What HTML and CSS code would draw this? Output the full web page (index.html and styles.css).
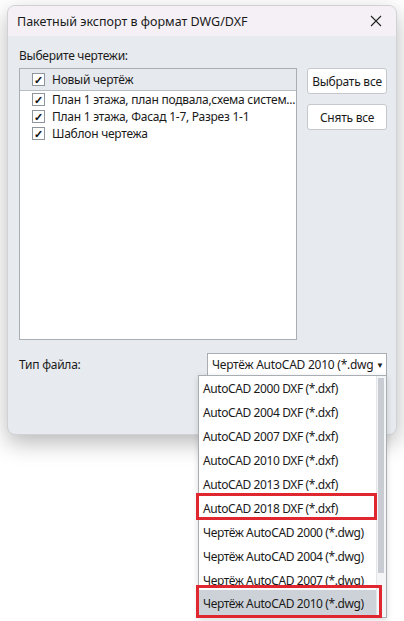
FILE: index.html
```html
<!DOCTYPE html>
<html lang="ru">
<head>
    <meta charset="UTF-8">
    <title>Пакетный экспорт</title>
    <link rel="stylesheet" href="styles.css">
</head>
<body>
    <div class="desktop">
        <!-- окно диалога -->
        <div class="dialog">
            <div class="titlebar">
                <div class="title">Пакетный экспорт в формат DWG/DXF</div>
                <svg class="close" width="12" height="12" viewBox="0 0 12 12">
                    <path d="M1 1 L11 11 M11 1 L1 11" stroke="#222" stroke-width="1.1" fill="none"/>
                </svg>
            </div>

            <div class="dialog-body">
                <div class="caption">Выберите чертежи:</div>

                <div class="main-row">
                    <div class="listbox">
                        <div class="list-item current">
                            <span class="check">✓</span>
                            <span class="item-text">Новый чертёж</span>
                        </div>
                        <div class="list-item">
                            <span class="check">✓</span>
                            <span class="item-text">План 1 этажа, план подвала,схема систем...</span>
                        </div>
                        <div class="list-item">
                            <span class="check">✓</span>
                            <span class="item-text">План 1 этажа, Фасад 1-7, Разрез 1-1</span>
                        </div>
                        <div class="list-item">
                            <span class="check">✓</span>
                            <span class="item-text">Шаблон чертежа</span>
                        </div>
                    </div>

                    <div class="buttons">
                        <div class="btn">Выбрать все</div>
                        <div class="btn">Снять все</div>
                    </div>
                </div>

                <div class="filetype-row">
                    <div class="filetype-label">Тип файла:</div>
                    <div class="combo">
                        <div class="combo-clip"><span class="combo-text">Чертёж AutoCAD 2010 (*.dwg)</span></div>
                        <span class="combo-arrow">▼</span>
                    </div>
                </div>
            </div>
        </div>

        <!-- выпадающий список -->
        <div class="dropdown">
            <div class="dropdown-items">
                <div class="dd-item">AutoCAD 2000 DXF (*.dxf)</div>
                <div class="dd-item">AutoCAD 2004 DXF (*.dxf)</div>
                <div class="dd-item">AutoCAD 2007 DXF (*.dxf)</div>
                <div class="dd-item">AutoCAD 2010 DXF (*.dxf)</div>
                <div class="dd-item">AutoCAD 2013 DXF (*.dxf)</div>
                <div class="dd-item marked">AutoCAD 2018 DXF (*.dxf)</div>
                <div class="dd-item">Чертёж AutoCAD 2000 (*.dwg)</div>
                <div class="dd-item">Чертёж AutoCAD 2004 (*.dwg)</div>
                <div class="dd-item">Чертёж AutoCAD 2007 (*.dwg)</div>
                <div class="dd-item selected marked">Чертёж AutoCAD 2010 (*.dwg)</div>
            </div>
            <div class="scrollbar">
                <div class="thumb"></div>
            </div>
        </div>
    </div>
</body>
</html>
```

FILE: styles.css
```css
* {
    margin: 0;
    padding: 0;
    box-sizing: border-box;
}

body {
    font-family: "Noto Sans", "Open Sans", sans-serif;
    font-size: 12px;
    letter-spacing: -0.25px;
    color: #1a1a1a;
    background: #ffffff;
}

/* рабочая область */
.desktop {
    position: relative;
    width: 404px;
    height: 621px;
    padding: 5px 7px 0 7px;
    overflow: hidden;
    background: #ffffff;
}

/* окно */
.dialog {
    width: 390px;
    height: 430px;
    border: 1px solid #cfd1d5;
    border-radius: 8px;
    background: #e7eaee;
    box-shadow: 0 8px 22px rgba(0, 0, 0, 0.28);
    overflow: hidden;
}

.titlebar {
    height: 30px;
    background: #f4f0f6;
    display: flex;
    align-items: center;
    padding: 0 14px 0 9px;
}
.title {
    flex: 1;
    font-size: 12.5px;
    letter-spacing: 0;
    color: #1a1a1a;
}
.close {
    display: block;
}

.dialog-body {
    padding: 12px 9px 0 11px;
}

.caption {
    height: 20px;
    line-height: 16px;
}

.main-row {
    display: flex;
    gap: 10px;
}

/* список чертежей */
.listbox {
    width: 278px;
    height: 272px;
    background: #ffffff;
    border: 1px solid #a9aeb5;
}
.list-item {
    height: 17px;
    display: flex;
    align-items: center;
    padding-left: 12px;
    white-space: nowrap;
}
.list-item.current {
    height: 22px;
    background: #e6e9ed;
    border-bottom: 1px solid #b9bec5;
}
.check {
    width: 13px;
    height: 13px;
    border: 1px solid #8f959c;
    background: #fff;
    font-size: 11px;
    line-height: 11px;
    text-align: center;
    font-weight: bold;
    color: #111;
    margin-right: 7px;
}

/* кнопки */
.buttons {
    display: flex;
    flex-direction: column;
    gap: 10px;
}
.btn {
    width: 80px;
    height: 26px;
    background: #ffffff;
    border: 1px solid #c4c8cd;
    border-radius: 3px;
    display: flex;
    align-items: center;
    justify-content: center;
}

/* тип файла */
.filetype-row {
    display: flex;
    align-items: center;
    margin-top: 13px;
}
.filetype-label {
    width: 188px;
}
.combo {
    width: 180px;
    height: 23px;
    background: #ffffff;
    border: 1px solid #a9aeb5;
    display: flex;
    align-items: center;
    padding-left: 4px;
}
.combo-clip {
    width: 161px;
    overflow: hidden;
    white-space: nowrap;
}
.combo-arrow {
    font-size: 8px;
    margin-left: 3px;
    color: #222;
}

/* выпадающий список поверх окна */
.dropdown {
    position: absolute;
    left: 198px;
    top: 375px;
    width: 189px;
    height: 243px;
    background: #ffffff;
    border: 1px solid #a9aeb5;
    display: flex;
    box-shadow: 0 2px 6px rgba(0, 0, 0, 0.15);
}
.dropdown-items {
    flex: 1;
}
.dd-item {
    position: relative;
    height: 24px;
    line-height: 24px;
    padding-left: 4px;
    letter-spacing: -0.4px;
    white-space: nowrap;
}
.dd-item:first-child {
    margin-top: 1px;
}
.dd-item.selected {
    background: #cdd2d8;
    height: 27px;
    line-height: 28px;
    margin-top: -3px;
}
.dd-item.marked::after {
    content: "";
    position: absolute;
    left: -3px;
    right: -1px;
    top: -4px;
    bottom: 1px;
    border: 3px solid #e0262e;
}
.dd-item.selected.marked::after {
    top: -5px;
    bottom: -1px;
    right: -6px;
}

.scrollbar {
    width: 10px;
    padding: 2px 2px 0 1px;
    background: #f4f5f6;
    border-left: 1px solid #e3e5e8;
}
.thumb {
    height: 195px;
    background: #c9cdd3;
}
```
